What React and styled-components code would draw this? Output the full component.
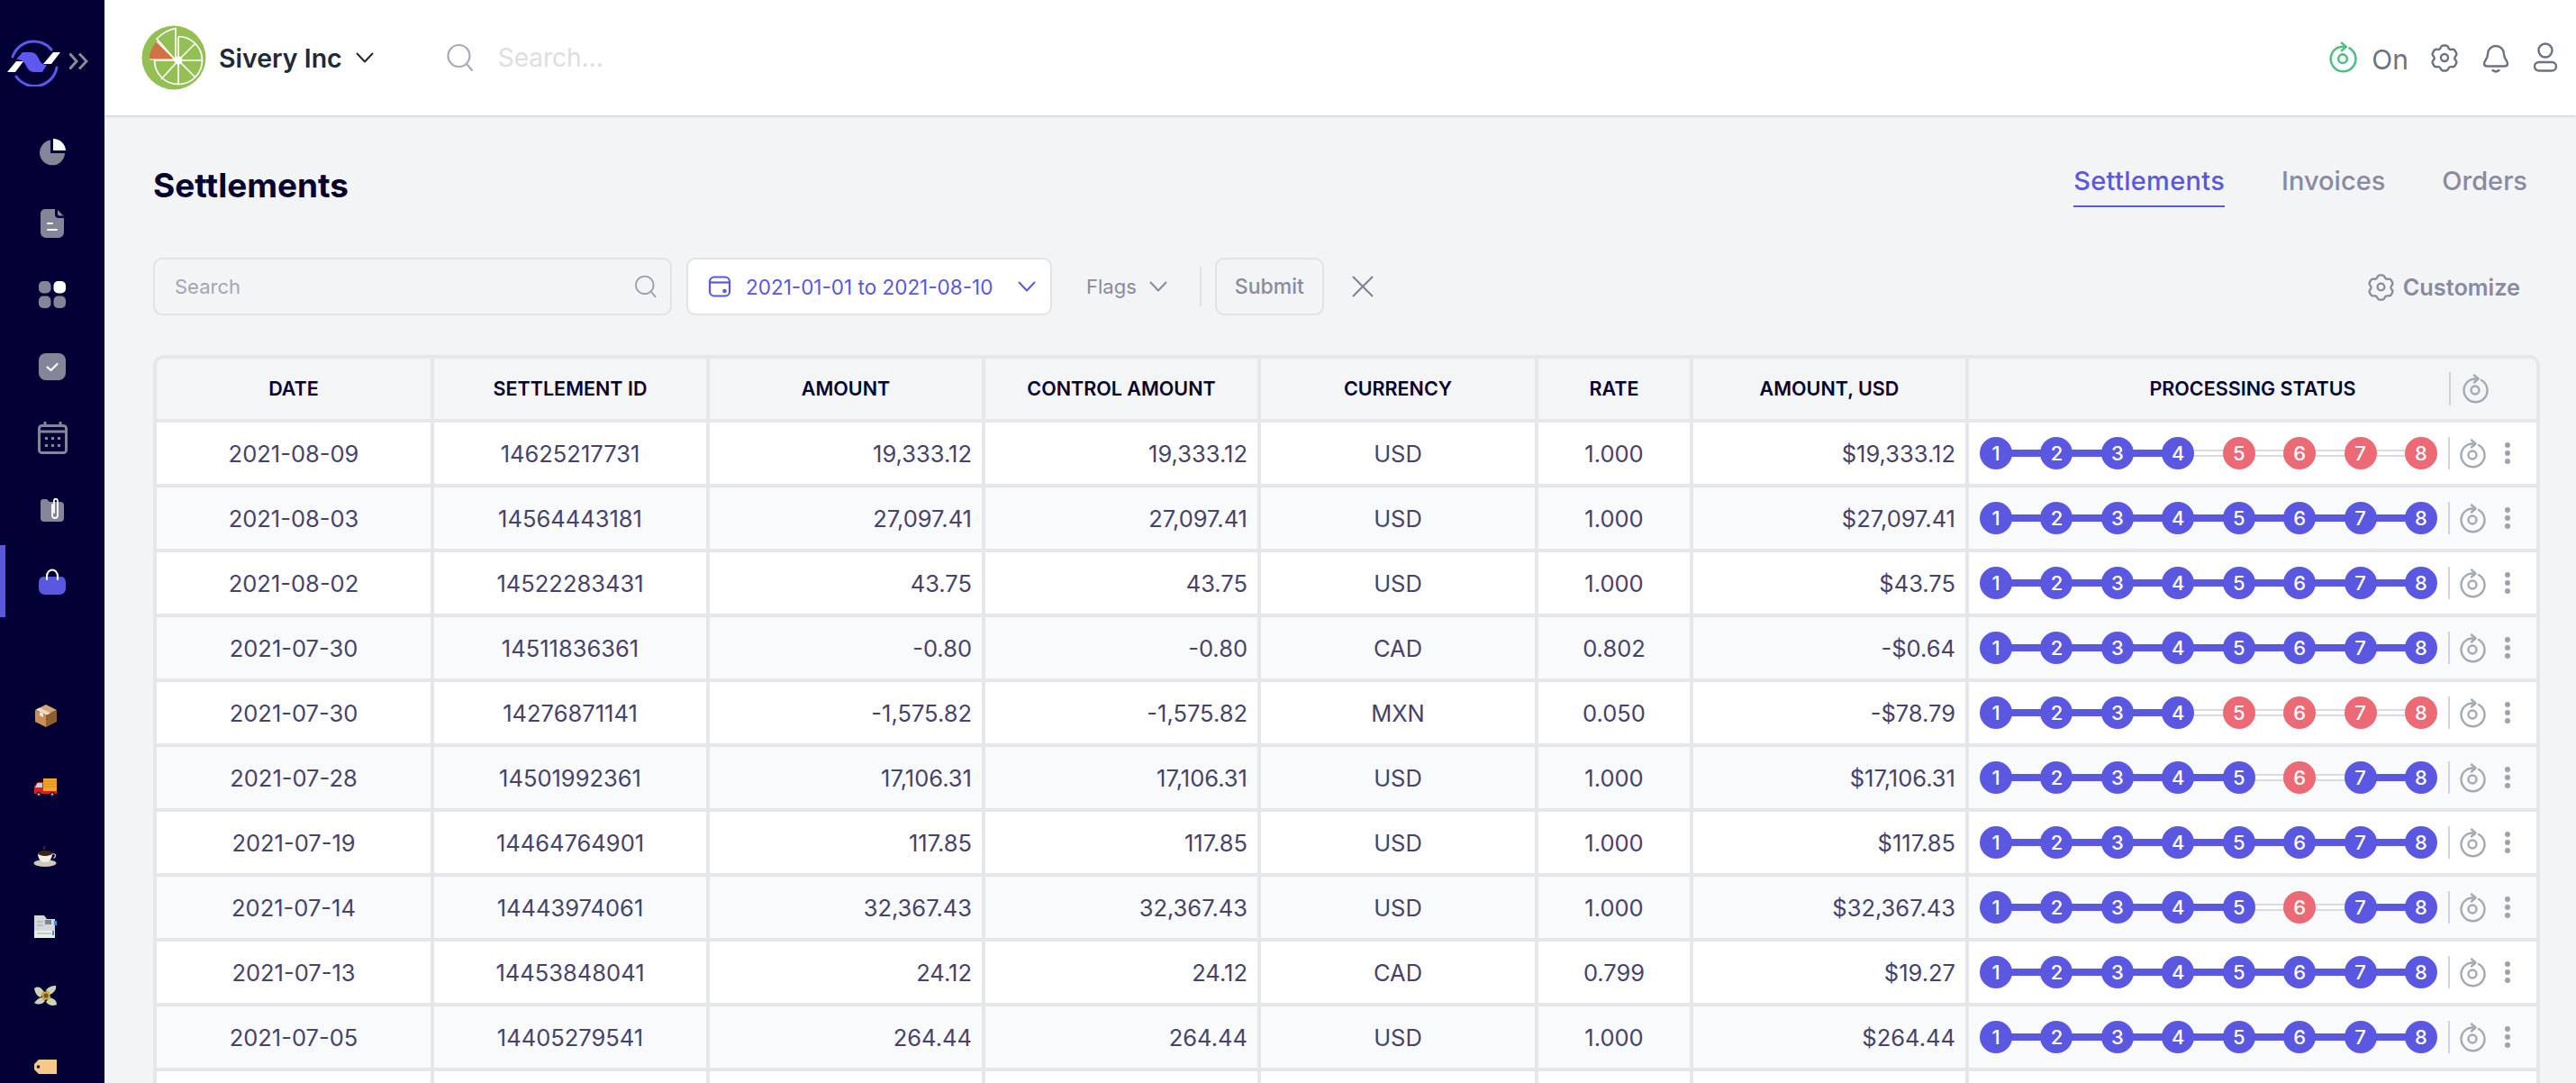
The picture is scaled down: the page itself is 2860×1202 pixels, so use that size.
import React from "react";
import styled, { createGlobalStyle } from "styled-components";

const GlobalStyle = createGlobalStyle`
  html, body {
    margin: 0;
    padding: 0;
    background: #f3f4f6;
    font-family: Inter, "Noto Sans", sans-serif;
  }
  * { box-sizing: border-box; }
`;

const INDIGO = "#5a57e0";
const RED = "#ec6a76";
const LINE = "#e5e7eb";
const NAVY = "#05022f";
const MUTED = "#8a8a9e";

const Page = styled.div`
  display: flex;
  width: 2860px;
  height: 1202px;
  overflow: hidden;
`;

const Sidebar = styled.aside`
  flex: 0 0 116px;
  background: #020035;
  display: flex;
  flex-direction: column;
`;

const LogoRow = styled.div`
  height: 129px;
  flex: none;
  padding: 42px 0 0 8px;
  display: flex;
  align-items: flex-start;
  gap: 8px;
`;

const DoubleChevronBox = styled.svg`
  margin-top: 16px;
`;

const NavItem = styled.div`
  height: 79.4px;
  flex: none;
  display: flex;
  align-items: center;
  justify-content: center;
  border-left: 6px solid ${(p) => (p.$active ? INDIGO : "transparent")};
  padding-right: 6px;
`;

const EmojiList = styled.div`
  margin-top: 94px;
  display: flex;
  flex-direction: column;
  gap: 48px;
  padding-left: 37px;
`;

const Emoji = styled.svg`
  width: 28px;
  height: 30px;
  flex: none;
  display: block;
`;

const Main = styled.main`
  flex: 1;
  min-width: 0;
  display: flex;
  flex-direction: column;
`;

const TopBar = styled.header`
  height: 128px;
  flex: none;
  background: #fff;
  box-shadow: 0 1px 3px rgba(0, 0, 0, 0.18);
  display: flex;
  align-items: center;
  padding: 0 20px 0 41px;
`;

const OrgName = styled.span`
  margin: 0 15px 0 14px;
  font-size: 28.5px;
  font-weight: 600;
  color: #1f2937;
`;

const TopSearch = styled.div`
  display: flex;
  align-items: center;
  gap: 26px;
  margin-left: 80px;
  flex: 1;
  font-size: 28px;
  color: #dcdee3;
`;

const TopRight = styled.div`
  display: flex;
  align-items: center;
  gap: 26px;
`;

const OnStatus = styled.div`
  display: flex;
  align-items: center;
  gap: 16px;
  margin-right: -2px;
  font-size: 30px;
  color: #6b7280;
`;

const OnLabel = styled.span`
  margin-top: 4px;
`;

const Content = styled.div`
  padding: 0 40px 0 54px;
  flex: 1;
`;

const TitleRow = styled.div`
  display: flex;
  justify-content: space-between;
  align-items: flex-start;
  height: 159px;
`;

const Title = styled.h1`
  margin: 55px 0 0;
  font-size: 37px;
  line-height: 46px;
  font-weight: 700;
  color: ${NAVY};
`;

const Tabs = styled.nav`
  display: flex;
  gap: 63px;
  margin: 55px 14px 0 0;
`;

const Tab = styled.span`
  font-size: 29px;
  font-weight: 500;
  line-height: 36px;
  padding-bottom: 9px;
  letter-spacing: ${(p) => (p.$active ? "0.3px" : "0")};
  color: ${(p) => (p.$active ? INDIGO : MUTED)};
  border-bottom: 2px solid ${(p) => (p.$active ? INDIGO : "transparent")};
`;

const Toolbar = styled.div`
  display: flex;
  align-items: center;
  height: 62px;
`;

const SearchBox = styled.div`
  width: 576px;
  height: 64px;
  display: flex;
  align-items: center;
  justify-content: space-between;
  padding: 0 14px 0 22px;
  border: 2px solid #e1e3e7;
  border-radius: 10px;
  font-size: 22px;
  color: #a3a5b5;
`;

const DateBox = styled.div`
  width: 406px;
  height: 64px;
  margin-left: 16px;
  background: #fff;
  display: flex;
  align-items: center;
  padding: 0 16px 0 22px;
  border: 2px solid #e1e3e7;
  border-radius: 10px;
  font-size: 22.5px;
  color: ${INDIGO};
`;

const DateText = styled.span`
  margin: 0 auto 0 16px;
`;

const FlagsButton = styled.div`
  display: flex;
  align-items: center;
  gap: 14px;
  margin-left: 38px;
  font-size: 22px;
  color: ${MUTED};
`;

const Divider = styled.div`
  width: 2px;
  height: 44px;
  background: #dfe1e5;
  margin: 0 15px 0 36px;
`;

const SubmitButton = styled.div`
  width: 121px;
  height: 64px;
  display: flex;
  align-items: center;
  justify-content: center;
  border: 2px solid #e1e3e7;
  border-radius: 10px;
  font-size: 23px;
  font-weight: 500;
  color: ${MUTED};
`;

const ClearIcon = styled.svg`
  margin-left: 30px;
`;

const Customize = styled.div`
  margin-left: auto;
  margin-right: 22px;
  display: flex;
  align-items: center;
  gap: 9px;
  font-size: 25.3px;
  font-weight: 600;
  color: ${MUTED};
`;

const Table = styled.div`
  margin-top: 45px;
  width: 2650px;
  border: 4px solid ${LINE};
  border-bottom: none;
  border-radius: 12px 12px 0 0;
  overflow: hidden;
`;

const COLUMNS = "308px 306px 306px 306px 308px 172px 306px 1fr";

const Row = styled.div`
  display: grid;
  grid-template-columns: ${COLUMNS};
  height: ${(p) => (p.$head ? "71px" : "72px")};
  border-bottom: 4px solid ${LINE};
  background: ${(p) => (p.$head ? "#f4f5f6" : p.$even ? "#f9fafb" : "#fff")};
`;

const Cell = styled.div`
  display: flex;
  align-items: center;
  justify-content: ${(p) => (p.$right ? "flex-end" : "center")};
  padding-right: ${(p) => (p.$right ? "11px" : "0")};
  border-right: 4px solid ${LINE};
  font-size: 25.5px;
  color: #45436b;
`;

const HeadCell = styled(Cell)`
  padding-bottom: 2px;
  font-size: 21.5px;
  font-weight: 600;
  color: ${NAVY};
`;

const StatusCell = styled.div`
  display: flex;
  align-items: center;
  padding-left: 12px;
`;

const StatusHead = styled.div`
  display: flex;
  align-items: center;
  height: 100%;
`;

const StatusTitle = styled.div`
  width: 533px;
  padding: 0 0 2px 97px;
  text-align: center;
  font-size: 21.5px;
  font-weight: 600;
  color: ${NAVY};
`;

const HeadRule = styled.div`
  width: 2px;
  height: 37px;
  background: #d1d5db;
  margin-right: 12px;
`;

const Steps = styled.div`
  width: 508px;
  display: flex;
  align-items: center;
  flex: none;
`;

const Step = styled.span`
  position: relative;
  z-index: 1;
  width: 36px;
  height: 36px;
  flex: none;
  border-radius: 50%;
  display: flex;
  align-items: center;
  justify-content: center;
  font-size: 22px;
  font-weight: 500;
  color: #fff;
  background: ${(p) => (p.$failed ? RED : INDIGO)};
`;

const Connector = styled.span`
  flex: 1;
  height: 8px;
  margin: 0 -1px;
  background: ${(p) => (p.$on ? INDIGO : "#fff")};
  border-style: solid;
  border-color: #d9dbe0;
  border-width: ${(p) => (p.$on ? "0" : "2px 0")};
`;

const RowRule = styled.div`
  width: 2px;
  height: 36px;
  background: #d1d5db;
  margin: 0 10px 0 12px;
  flex: none;
`;

const Kebab = styled.div`
  display: flex;
  flex-direction: column;
  gap: 3px;
  margin-left: 21px;
  span {
    width: 6px;
    height: 6px;
    border-radius: 50%;
    background: #9ca3af;
  }
`;

const line = { fill: "none", strokeLinecap: "round", strokeLinejoin: "round" };

const Chevron = ({ color, size = 20 }) => (
  <svg width={size} height={size * 0.6} viewBox="0 0 20 12" stroke={color} strokeWidth="2" {...line}>
    <path d="M1.5 1.5 10 10.5l8.5-9" />
  </svg>
);

const SearchIcon = ({ size = 32, color = "#a7aab8" }) => (
  <svg width={size} height={size} viewBox="0 0 32 32" stroke={color} strokeWidth="2.2" {...line}>
    <circle cx="14.5" cy="14" r="12" />
    <path d="m24 24 5 6" />
  </svg>
);

const Gear = ({ size = 32, color = "#6b7280" }) => (
  <svg width={size} height={size} viewBox="0 0 24 24" stroke={color} strokeWidth="1.8" {...line}>
    <circle cx="12" cy="12" r="3" />
    <path d="M9.2 2.9a2 2 0 0 1 1.7-1h2.2a2 2 0 0 1 1.7 1l.7 1.3a2 2 0 0 0 1.9 1l1.5-.1a2 2 0 0 1 1.8 1l1.1 1.9a2 2 0 0 1-.1 2.1l-.9 1.2a2 2 0 0 0 0 2.2l.9 1.2a2 2 0 0 1 .1 2.1l-1.1 1.9a2 2 0 0 1-1.8 1l-1.5-.1a2 2 0 0 0-1.9 1l-.7 1.3a2 2 0 0 1-1.7 1h-2.2a2 2 0 0 1-1.7-1l-.7-1.3a2 2 0 0 0-1.9-1l-1.5.1a2 2 0 0 1-1.8-1l-1.1-1.9a2 2 0 0 1 .1-2.1l.9-1.2a2 2 0 0 0 0-2.2l-.9-1.2a2 2 0 0 1-.1-2.1l1.1-1.9a2 2 0 0 1 1.8-1l1.5.1a2 2 0 0 0 1.9-1z" />
  </svg>
);

const Cycle = ({ size = 30, color = "#a4a9b3" }) => (
  <svg width={size} height={size * 1.1} viewBox="0 0 30 33" stroke={color} strokeWidth="2.4" {...line}>
    <circle cx="15" cy="18" r="4.5" />
    <path d="M10 6.5A13 13 0 1 0 22 7" />
    <path d="M10 6.5c2.5-1 5-1.2 8-1" />
    <path d="m14 1.5 4.5 4-4.5 4" />
  </svg>
);

const Bell = () => (
  <svg width="30" height="34" viewBox="0 0 30 34" stroke="#6b7280" strokeWidth="2.4" {...line}>
    <path d="M6 13a9 9 0 0 1 18 0c0 6 4 7 4 10.5 0 2-1.5 3-3.5 3h-19C3.5 26.5 2 25.5 2 23.5 2 20 6 19 6 13z" />
    <path d="M11.5 31c2 1.6 5 1.6 7 0" />
  </svg>
);

const User = () => (
  <svg width="28" height="34" viewBox="0 0 28 34" stroke="#6b7280" strokeWidth="2.4" {...line}>
    <circle cx="14" cy="9" r="7.5" />
    <rect x="2" y="22" width="24" height="9.5" rx="4.75" />
  </svg>
);

const LimeLogo = () => (
  <svg width="72" height="72" viewBox="0 0 72 72">
    <circle cx="36" cy="36" r="35.5" fill="#93bf55" />
    <g fill="none" stroke="#fff" strokeWidth="1.7">
      <path d="M41 39V13M41 39v27M41 39h26M41 39 22 60M41 39l18.5-18.5M41 39l18.5 18.5M41 39H14" />
      <path d="M41 12.5A26.5 26.5 0 1 1 14.5 39" />
      <path d="M17 15C23 9 30 5 38 3.5V39z" />
    </g>
    <path d="M17 18 37 38H9c-.5-7 3-14 8-20z" fill="#d17144" />
    <path d="M17 18 37 38H9" fill="none" stroke="#fff" strokeWidth="1.2" />
    <circle cx="41" cy="39" r="4.5" fill="#fff" />
  </svg>
);

const BrandMark = () => (
  <svg width="60" height="54" viewBox="8 42 60 54">
    <g fill="none" stroke="#5c58f0" strokeWidth="3" strokeLinecap="round">
      <path d="M14 63A25 25 0 0 1 57 55" />
      <path d="M63 75A25 25 0 0 1 18 85" />
    </g>
    <path d="M18 66l7-8h9c5 0 7 3 9 7 1.5 3 3 7 9 7l-5 8H38c-5 0-7-3-9-7-1.5-3-3-7-11-7z" fill="#5c58f0" />
    <path d="M8 80l10-12h8l-9 12zM48 71l11-13h8L57 71z" fill="#fff" />
  </svg>
);

const DoubleChevron = () => (
  <DoubleChevronBox width="22" height="20" viewBox="0 0 22 20" fill="none" stroke="#8b8b93" strokeWidth="3">
    <path d="M1.5 1.5 9 10l-7.5 8.5M12 1.5 20 10l-8 8.5" />
  </DoubleChevronBox>
);

const navIcons = [
  <svg width="30" height="30" viewBox="0 0 30 30" key="pie">
    <path d="M13 1.5A14 14 0 1 0 29 16H13z" fill="#85859a" />
    <path d="M16 0a14 14 0 0 1 14 13H16z" fill="#fff" />
  </svg>,
  <svg width="26" height="32" viewBox="0 0 26 32" key="file">
    <path d="M5 0h11v6a4 4 0 0 0 4 4h6v16a6 6 0 0 1-6 6H6a6 6 0 0 1-6-6V5a5 5 0 0 1 5-5z" fill="#85859a" />
    <path d="M19 1l6.5 6.5H21a2 2 0 0 1-2-2z" fill="#85859a" />
    <path d="M8 16h5M8 23h10" stroke="#fff" strokeWidth="2" strokeLinecap="round" />
  </svg>,
  <svg width="30" height="30" viewBox="0 0 30 30" key="grid">
    <rect width="13.5" height="13.5" rx="5" fill="#85859a" />
    <rect x="16.5" width="13.5" height="13.5" rx="5" fill="#fff" />
    <rect y="16.5" width="13.5" height="13.5" rx="5" fill="#85859a" />
    <rect x="16.5" y="16.5" width="13.5" height="13.5" rx="5" fill="#85859a" />
  </svg>,
  <svg width="30" height="30" viewBox="0 0 30 30" key="check">
    <rect width="30" height="30" rx="8" fill="#85859a" />
    <path d="m9.5 15.5 4 3.5 7-7" fill="none" stroke="#fff" strokeWidth="2.2" strokeLinecap="round" strokeLinejoin="round" />
  </svg>,
  <svg width="33" height="36" viewBox="0 0 33 36" key="calendar">
    <path d="M8 0v5M25 0v5" stroke="#85859a" strokeWidth="3" />
    <rect x="1.5" y="4.5" width="30" height="30" rx="3" fill="none" stroke="#85859a" strokeWidth="3" />
    <path d="M1 11h31" stroke="#85859a" strokeWidth="3" />
    <path d="M8 17h3v3H8zM15 17h3v3h-3zM22 17h3v3h-3zM8 25h3v3H8zM15 25h3v3h-3zM22 25h3v3h-3z" fill="#85859a" />
  </svg>,
  <svg width="26" height="28" viewBox="0 0 26 28" key="folder">
    <path d="M0 5a3 3 0 0 1 3-3h4l3 3h12a4 4 0 0 1 4 4v14a4 4 0 0 1-4 4H4a4 4 0 0 1-4-4z" fill="#85859a" />
    <path d="M13 8v12c0 4 6 4 6 0V4c0-3-4-3-4 0v13" fill="none" stroke="#fff" strokeWidth="1.8" strokeLinecap="round" />
  </svg>,
  <svg width="30" height="30" viewBox="0 0 30 30" key="bag">
    <path d="M9 10C9 0 21 0 21 10v2" fill="none" stroke="#fff" strokeWidth="2" />
    <path d="M5 10h20c3 0 5 3 5 7v6c0 4-3 7-7 7H7c-4 0-7-3-7-7v-6c0-4 2-7 5-7z" fill={INDIGO} />
    <path d="M9 8v5M21 8v5" stroke="#fff" strokeWidth="2" strokeLinecap="round" />
  </svg>,
];

const emojis = [
  <Emoji viewBox="0 0 28 30" key="box">
    <path d="M2 9 14 3l12 6-12 6z" fill="#d9a574" />
    <path d="M2 9v13l12 6V15z" fill="#c98e55" />
    <path d="M26 9v13l-12 6V15z" fill="#8f5f32" />
    <path d="m7 6.5 12 6-4 2L3 8.5z" fill="#e9dcc8" />
    <path d="m7 11 4 2v4l-4-2z" fill="#e8e6e0" />
  </Emoji>,
  <Emoji viewBox="0 0 28 30" key="truck">
    <rect x="11" y="7" width="15" height="14" fill="#f0a62c" />
    <path d="M11 10h15M11 13h15M11 16h15" stroke="#d98a16" />
    <path d="M1 24v-8l4-5h6v10h15v3z" fill="#d8202a" />
    <path d="M4.5 12H10v5H2z" fill="#a9dcef" />
    <circle cx="6" cy="24.5" r="2.8" fill="#2a2a2a" />
    <circle cx="21" cy="24.5" r="2.8" fill="#2a2a2a" />
    <circle cx="6" cy="24.5" r="1.1" fill="#ccc" />
    <circle cx="21" cy="24.5" r="1.1" fill="#ccc" />
  </Emoji>,
  <Emoji viewBox="0 0 28 30" key="coffee">
    <ellipse cx="13" cy="23" rx="12.5" ry="4" fill="#cfc8ba" />
    <path d="M5 12h16c0 6-3 10-8 10s-8-4-8-10z" fill="#f2efe9" />
    <ellipse cx="13" cy="12" rx="8" ry="3" fill="#3c2415" />
    <path d="M21 13c4-1 5 2 1.5 4.5" fill="none" stroke="#e5e0d6" strokeWidth="1.2" />
    <path d="M12 8c-1-2 1-2 0-4" fill="none" stroke="#55556b" strokeWidth="1" />
  </Emoji>,
  <Emoji viewBox="0 0 28 30" key="cabinet">
    <path d="M1 3h11l3 4h9v21H1z" fill="#d5d8db" />
    <path d="M1 20h23v8H1z" fill="#eceded" />
    <path d="M13 8h7v5h-7z" fill="#7f8388" />
    <path d="M4 23h16M4 10h7M4 14h7" stroke="#a0a4a9" />
    <rect x="23" y="9" width="3" height="5" fill="#3f8fe0" />
    <rect x="21" y="20" width="2" height="5" fill="#3f8fe0" />
  </Emoji>,
  <Emoji viewBox="0 0 28 30" key="money">
    <path d="M1 6c4-3 8-1 11 4l-4 6C5 15 2 12 1 6zM25 3c1 4-2 8-7 10l-4-5c3-4 7-5 11-5zM1 22c3-4 6-6 9-6l3 4c-2 3-7 5-12 2zM26 24c-4 2-9 1-12-3l4-5c4 1 8 3 8 8z" fill="#cdd3bb" />
    <rect x="9.5" y="9.5" width="9" height="9" rx="1" transform="rotate(-12 14 14)" fill="#d4a63a" />
    <circle cx="14" cy="14" r="2.6" fill="#6f5a22" />
  </Emoji>,
  <Emoji viewBox="0 0 28 30" key="tag">
    <path d="M6 7h20v16H6l-5-5v-6z" fill="#f6c889" />
    <circle cx="5.5" cy="15" r="1.8" fill="#020035" />
  </Emoji>,
];

const rows = [
  ["2021-08-09", "14625217731", "19,333.12", "USD", "1.000", "$19,333.12", [5, 6, 7, 8]],
  ["2021-08-03", "14564443181", "27,097.41", "USD", "1.000", "$27,097.41", []],
  ["2021-08-02", "14522283431", "43.75", "USD", "1.000", "$43.75", []],
  ["2021-07-30", "14511836361", "-0.80", "CAD", "0.802", "-$0.64", []],
  ["2021-07-30", "14276871141", "-1,575.82", "MXN", "0.050", "-$78.79", [5, 6, 7, 8]],
  ["2021-07-28", "14501992361", "17,106.31", "USD", "1.000", "$17,106.31", [6]],
  ["2021-07-19", "14464764901", "117.85", "USD", "1.000", "$117.85", []],
  ["2021-07-14", "14443974061", "32,367.43", "USD", "1.000", "$32,367.43", [6]],
  ["2021-07-13", "14453848041", "24.12", "CAD", "0.799", "$19.27", []],
  ["2021-07-05", "14405279541", "264.44", "USD", "1.000", "$264.44", []],
];

const heads = ["DATE", "SETTLEMENT ID", "AMOUNT", "CONTROL AMOUNT", "CURRENCY", "RATE", "AMOUNT, USD"];

const StatusSteps = ({ failed }) => (
  <Steps>
    {[1, 2, 3, 4, 5, 6, 7, 8].map((n) => (
      <React.Fragment key={n}>
        <Step $failed={failed.includes(n)}>{n}</Step>
        {n < 8 && <Connector $on={!failed.includes(n) && !failed.includes(n + 1)} />}
      </React.Fragment>
    ))}
  </Steps>
);

const App = () => (
  <Page>
    <GlobalStyle />
    <Sidebar>
      <LogoRow>
        <BrandMark />
        <DoubleChevron />
      </LogoRow>
      {navIcons.map((icon, i) => (
        <NavItem key={i} $active={i === 6}>
          {icon}
        </NavItem>
      ))}
      <EmojiList>{emojis}</EmojiList>
    </Sidebar>
    <Main>
      <TopBar>
        <LimeLogo />
        <OrgName>Sivery Inc</OrgName>
        <Chevron color="#1f2937" />
        <TopSearch>
          <SearchIcon />
          <span>Search...</span>
        </TopSearch>
        <TopRight>
          <OnStatus>
            <Cycle size={32} color="#4fbf85" />
            <OnLabel>On</OnLabel>
          </OnStatus>
          <Gear />
          <Bell />
          <User />
        </TopRight>
      </TopBar>
      <Content>
        <TitleRow>
          <Title>Settlements</Title>
          <Tabs>
            <Tab $active>Settlements</Tab>
            <Tab>Invoices</Tab>
            <Tab>Orders</Tab>
          </Tabs>
        </TitleRow>
        <Toolbar>
          <SearchBox>
            Search
            <SearchIcon size={26} color="#9a9caf" />
          </SearchBox>
          <DateBox>
            <svg width="26" height="26" viewBox="0 0 26 26" fill="none" stroke={INDIGO} strokeWidth="2.2">
              <rect x="2" y="2.5" width="22" height="21" rx="5" />
              <path d="M2 8.5h22" />
              <circle cx="18.5" cy="18" r="1.2" fill={INDIGO} />
            </svg>
            <DateText>2021-01-01 to 2021-08-10</DateText>
            <Chevron color={INDIGO} />
          </DateBox>
          <FlagsButton>
            Flags
            <Chevron color={MUTED} />
          </FlagsButton>
          <Divider />
          <SubmitButton>Submit</SubmitButton>
          <ClearIcon width="26" height="26" viewBox="0 0 26 26" fill="none" stroke="#7d8090" strokeWidth="2">
            <path d="m2 2 22 22M24 2 2 24" />
          </ClearIcon>
          <Customize>
            <Gear size={31} color={MUTED} />
            Customize
          </Customize>
        </Toolbar>
        <Table>
          <Row $head>
            {heads.map((h) => (
              <HeadCell key={h}>{h}</HeadCell>
            ))}
            <StatusHead>
              <StatusTitle>PROCESSING STATUS</StatusTitle>
              <HeadRule />
              <Cycle size={30} />
            </StatusHead>
          </Row>
          {rows.map((r, i) => (
            <Row key={i} $even={i % 2 === 1}>
              <Cell>{r[0]}</Cell>
              <Cell>{r[1]}</Cell>
              <Cell $right>{r[2]}</Cell>
              <Cell $right>{r[2]}</Cell>
              <Cell>{r[3]}</Cell>
              <Cell>{r[4]}</Cell>
              <Cell $right>{r[5]}</Cell>
              <StatusCell>
                <StatusSteps failed={r[6]} />
                <RowRule />
                <Cycle size={30} />
                <Kebab>
                  <span />
                  <span />
                  <span />
                </Kebab>
              </StatusCell>
            </Row>
          ))}
          <Row>
            {heads.map((h) => (
              <Cell key={h} />
            ))}
          </Row>
        </Table>
      </Content>
    </Main>
  </Page>
);

export default App;
